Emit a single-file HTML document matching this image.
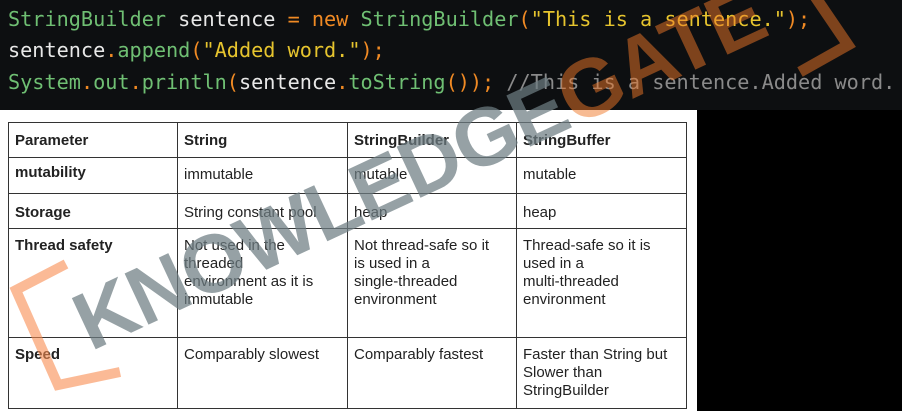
<!DOCTYPE html>
<html><head><style>
body{margin:0;width:902px;height:411px;background:#000;position:relative;overflow:hidden;font-family:"Liberation Sans",sans-serif}
.code{position:absolute;left:0;top:0;width:902px;height:110px;background:#0d0f11;font-family:"DejaVu Sans Mono","Liberation Mono",monospace;font-size:20.2px;color:#e8e8e8;white-space:pre}
.code div{position:absolute;left:8px}
.g{color:#6fbf73}.o{color:#f08a24}.y{color:#e6c42e}.c{color:#8a8a8a}
.white{position:absolute;left:0;top:110px;width:697px;height:301px;background:#fff}
table{position:absolute;left:8px;top:122px;border-collapse:collapse;font-size:15px;color:#222;table-layout:fixed}
td{border:1px solid #333;vertical-align:top;padding:9px 4px 0 6px;line-height:18px;white-space:nowrap}
td.b{font-weight:bold}
.wm{position:absolute;left:62px;top:290px;font-size:82px;line-height:82px;font-weight:bold;letter-spacing:-1px;transform:rotate(-25deg);transform-origin:left top;white-space:nowrap;color:rgba(110,125,130,.72)}
.wm span{color:rgba(240,120,40,.5)}
</style></head><body>
<div class="code">
<div style="top:7px"><span class="g">StringBuilder</span> sentence <span class="o">=</span> <span class="o">new</span> <span class="g">StringBuilder</span><span class="o">(</span><span class="y">"This is a sentence."</span><span class="o">);</span></div>
<div style="top:38px">sentence<span class="o">.</span><span class="g">append</span><span class="o">(</span><span class="y">"Added word."</span><span class="o">);</span></div>
<div style="top:70px"><span class="g">System</span><span class="o">.</span><span class="g">out</span><span class="o">.</span><span class="g">println</span><span class="o">(</span>sentence<span class="o">.</span><span class="g">toString</span><span class="o">());</span> <span class="c">//This is a sentence.Added word.</span></div>
</div>
<div class="white"></div>
<table>
<colgroup><col style="width:169px"><col style="width:170px"><col style="width:169px"><col style="width:170px"></colgroup>
<tr style="height:35px"><td class="b">Parameter</td><td class="b">String</td><td class="b">StringBuilder</td><td class="b">StringBuffer</td></tr>
<tr style="height:36px"><td class="b" style="padding-top:6px">mutability</td><td style="padding-top:8px">immutable</td><td style="padding-top:8px">mutable</td><td style="padding-top:8px">mutable</td></tr>
<tr style="height:35px"><td class="b" style="padding-top:10px">Storage</td><td style="padding-top:10px">String constant pool</td><td style="padding-top:10px">heap</td><td style="padding-top:10px">heap</td></tr>
<tr style="height:109px"><td class="b" style="padding-top:8px">Thread safety</td><td style="padding-top:8px">Not used in the<br>threaded<br>environment as it is<br>immutable</td><td style="padding-top:8px">Not thread-safe so it<br>is used in a<br>single-threaded<br>environment</td><td style="padding-top:8px">Thread-safe so it is<br>used in a<br>multi-threaded<br>environment</td></tr>
<tr style="height:71px"><td class="b" style="padding-top:8px">Speed</td><td style="padding-top:8px">Comparably slowest</td><td style="padding-top:8px">Comparably fastest</td><td style="padding-top:8px">Faster than String but<br>Slower than<br>StringBuilder</td></tr>
</table>
<svg style="position:absolute;left:0;top:0" width="902" height="411"><path d="M66 264 L16 290 L58 385 L120 372" fill="none" stroke="rgba(248,140,80,.6)" stroke-width="10"/><path d="M814 -5 L848 45 L800 72" fill="none" stroke="rgba(240,120,40,.5)" stroke-width="11"/></svg>
<div class="wm">KNOWLEDGE<span>GATE</span></div>
</body></html>
